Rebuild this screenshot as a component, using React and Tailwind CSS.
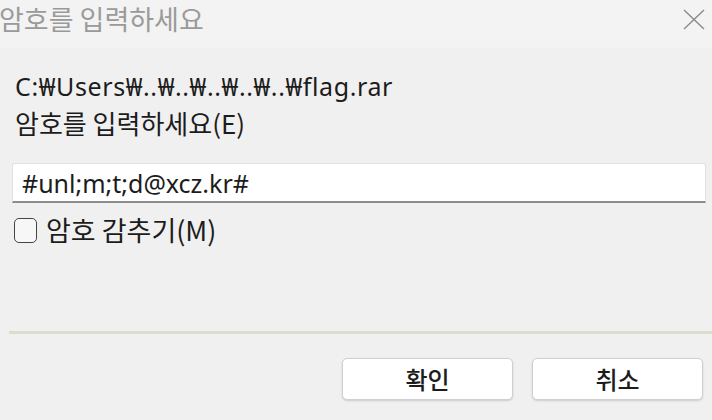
import React from "react";

export default function App() {
  return (
    <div className="w-[712px] h-[420px] overflow-hidden bg-[#f0f0f0] flex flex-col font-['Noto_Sans','Noto_Sans_CJK_KR',sans-serif]">
      {/* Title bar */}
      <div className="h-[48px] bg-[#f3f3f3] flex items-start justify-between">
        <span className="mt-[4px] -ml-[1px] text-[27px] leading-[30px] text-[#9a9a9a] font-['Noto_Sans_CJK_KR',sans-serif]">
          암호를 입력하세요
        </span>
        <svg
          className="mt-[9px] mr-[7px]"
          width="22"
          height="21"
          viewBox="0 0 22 21"
          fill="none"
        >
          <path d="M1 1 L21 20 M21 1 L1 20" stroke="#8a8a8a" strokeWidth="1.4" />
        </svg>
      </div>

      {/* Body */}
      <div className="flex flex-col pl-[15px]">
        <div className="mt-[23px] text-[25px] leading-[30px] tracking-[0.6px] text-[#1c1c1c]">
          C:₩Users₩..₩..₩..₩..₩..₩flag.rar
        </div>
        <div className="mt-[7px] text-[26px] leading-[30px] text-[#1c1c1c] font-['Noto_Sans_CJK_KR',sans-serif]">
          암호를 입력하세요(E)
        </div>
        <div className="mt-[25px] -ml-[3px] w-[694px] h-[40px] bg-white rounded-t-[3px] border border-[#e2e2e2] border-b-2 border-b-[#8c8c8c] flex items-center pl-[9px]">
          <span className="text-[25px] leading-[30px] text-[#1c1c1c]">
            #unl;m;t;d@xcz.kr#
          </span>
        </div>
        <div className="mt-[12px] h-[30px] flex items-center">
          <div className="-ml-[1px] w-[23px] h-[25px] rounded-[5px] border-[1.5px] border-[#444] bg-[#f7f7f7]" />
          <span className="ml-[9px] text-[27px] leading-[30px] text-[#1c1c1c] font-['Noto_Sans_CJK_KR',sans-serif]">
            암호 감추기(M)
          </span>
        </div>
      </div>

      {/* Separator */}
      <div className="mt-[86px] ml-[9px] h-[3px] bg-[#dcdccf]" />

      {/* Buttons */}
      <div className="mt-[24px] flex justify-end gap-[19px] pr-[9px]">
        <button className="w-[171px] h-[42px] bg-white rounded-[5px] border border-[#d0d0d0] shadow-[0_1px_2px_rgba(0,0,0,0.15)] text-[24px] leading-none text-[#1c1c1c] font-medium font-['Noto_Sans_CJK_KR',sans-serif]">
          확인
        </button>
        <button className="w-[171px] h-[42px] bg-white rounded-[5px] border border-[#d0d0d0] shadow-[0_1px_2px_rgba(0,0,0,0.15)] text-[24px] leading-none text-[#1c1c1c] font-medium font-['Noto_Sans_CJK_KR',sans-serif]">
          취소
        </button>
      </div>
    </div>
  );
}
